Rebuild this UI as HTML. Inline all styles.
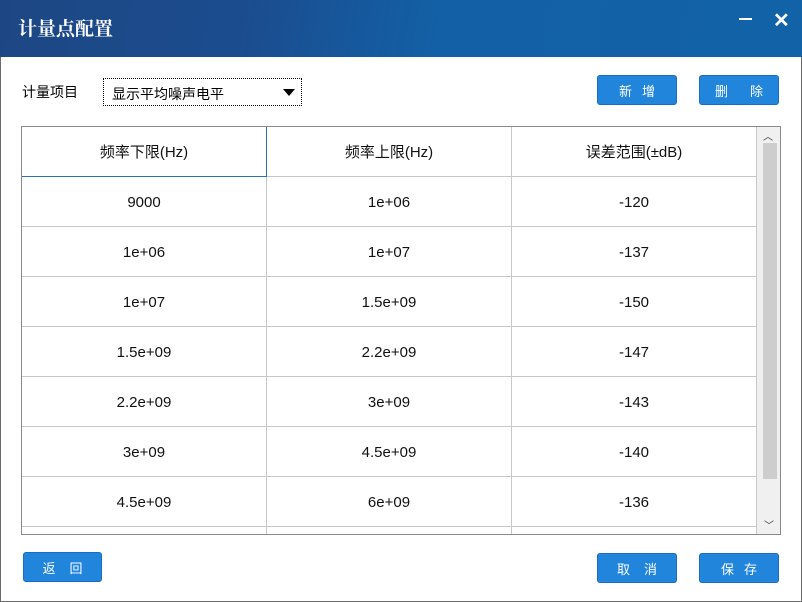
<!DOCTYPE html><html><head><style>
*{margin:0;padding:0;box-sizing:border-box}
body{width:802px;height:602px;position:relative;background:#fff;font-family:"Liberation Sans","Noto Sans CJK SC",sans-serif;overflow:hidden}
.win{position:absolute;left:0;top:0;width:802px;height:602px;border:1px solid #6b6b6b}
.title{position:absolute;left:0;top:0;width:802px;height:57px;background:linear-gradient(100deg,#1d4784 0%,#1b4c8e 30%,#1360a6 55%,#1262a8 100%)}
.title span{position:absolute;left:18px;top:14px;color:#fff;font-size:19px;font-family:"Noto Serif CJK SC",serif;font-weight:bold}
.btn{position:absolute;background:#2285dc;border:1px solid #1a6cc0;border-radius:3px;color:#fff;font-size:13px;display:flex;justify-content:center;align-items:center;white-space:nowrap}
.lbl{position:absolute;left:22px;top:82px;font-size:14px}
.combo{position:absolute;left:103px;top:78px;width:199px;height:28px;border:1px dotted #000;font-size:14px;padding:5px 8px}
.arr{position:absolute;right:6px;top:10px;width:0;height:0;border-left:6px solid transparent;border-right:6px solid transparent;border-top:7px solid #000}
.tbl{position:absolute;left:21px;top:126px;width:760px;height:409px;border:1px solid #8a8a8a;overflow:hidden}
.cell{position:absolute;height:50px;border-right:1px solid #c8c8c8;border-bottom:1px solid #c8c8c8;text-align:center;line-height:52px;font-size:15px;color:#111}
.sb{position:absolute;left:735px;top:0;width:23px;height:407px;background:#f0f0f0}
.th{position:absolute;left:6px;top:16px;width:14px;height:336px;background:#cdcdcd}
</style></head><body><div class="win"></div>
<div class="title"><span>计量点配置</span>
<div style="position:absolute;left:739px;top:18px;width:13px;height:2px;background:#fff"></div>
<div style="position:absolute;left:773px;top:8px;color:#fff;font-size:20px;font-weight:bold">✕</div></div>
<div class="lbl">计量项目</div>
<div class="combo">显示平均噪声电平<div class="arr"></div></div>
<div class="btn" style="left:597px;top:75px;width:80px;height:30px">新<span style="width:10px"></span>增</div>
<div class="btn" style="left:699px;top:75px;width:80px;height:30px">删<span style="width:22px"></span>除</div>
<div class="tbl" id="t"></div>
<div class="btn" style="left:23px;top:552px;width:79px;height:30px">返<span style="width:14px"></span>回</div>
<div class="btn" style="left:597px;top:553px;width:80px;height:30px">取<span style="width:14px"></span>消</div>
<div class="btn" style="left:699px;top:553px;width:80px;height:30px">保<span style="width:10px"></span>存</div>
<script>
var d=[["频率下限(Hz)","频率上限(Hz)","误差范围(±dB)"],["9000","1e+06","-120"],["1e+06","1e+07","-137"],["1e+07","1.5e+09","-150"],["1.5e+09","2.2e+09","-147"],["2.2e+09","3e+09","-143"],["3e+09","4.5e+09","-140"],["4.5e+09","6e+09","-136"],["","",""]];
var x=[0,245,490],w=[245,245,245],h='';
d.forEach(function(r,i){r.forEach(function(c,j){var st='left:'+x[j]+'px;top:'+(i*50)+'px;width:'+w[j]+'px;';if(i==0&&j==0)st+='border-right:1px solid #2a6fb8;border-bottom:1px solid #2a6fb8;';h+='<div class="cell" style="'+st+'">'+c+'</div>'})});
h+='<div class="sb"><div style="position:absolute;left:6px;top:1px;font-size:10px;color:#333">︿</div><div class="th"></div><div style="position:absolute;left:7px;top:390px;font-size:10px;color:#333">﹀</div></div>';
document.getElementById('t').innerHTML=h;
</script></body></html>
